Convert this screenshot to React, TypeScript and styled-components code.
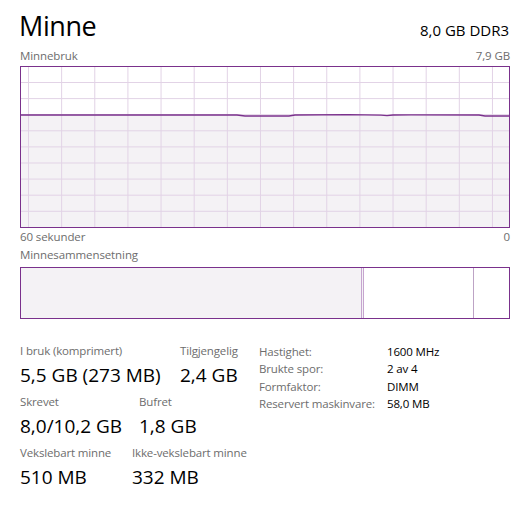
import { Fragment } from 'react';
import styled, { createGlobalStyle } from 'styled-components';

const GlobalStyle = createGlobalStyle`
  html, body {
    margin: 0;
    padding: 0;
    background: #ffffff;
  }
  body {
    font-family: 'Open Sans', 'Noto Sans', sans-serif;
    color: #000000;
  }
`;

const PURPLE = '#7a318c';

const Page = styled.div`
  display: flex;
  flex-direction: column;
  width: 490px;
  margin-left: 20px;
  padding-top: 8px;
`;

const Header = styled.div`
  display: flex;
  justify-content: space-between;
  align-items: baseline;
  height: 36px;
`;

const Title = styled.h1`
  margin: 0 0 0 -1px;
  font-size: 27px;
  line-height: 36px;
  font-weight: 400;
  letter-spacing: -0.4px;
`;

const Spec = styled.span`
  font-size: 15px;
  line-height: 20px;
  margin-right: 1px;
`;

const AxisRow = styled.div<{ $top: number }>`
  display: flex;
  justify-content: space-between;
  margin-top: ${(p) => p.$top}px;
  font-size: 11.5px;
  line-height: 16px;
  letter-spacing: -0.1px;
  color: #6d6d6d;
`;

const Chart = styled.div`
  height: 162px;
  margin-top: 2px;
  border: 1px solid ${PURPLE};
  box-sizing: border-box;

  svg {
    display: block;
  }
`;

const CompositionBar = styled.div`
  display: flex;
  height: 52px;
  margin-top: 4px;
  border: 1px solid ${PURPLE};
  box-sizing: border-box;
`;

const Segment = styled.div<{ $width?: number; $fill: string; $divider?: string }>`
  box-sizing: border-box;
  ${(p) => (p.$width ? `width: ${p.$width}px;` : 'flex: 1;')}
  flex-shrink: 0;
  background: ${(p) => p.$fill};
  ${(p) => (p.$divider ? `border-right: ${p.$divider};` : '')}
`;

const Stats = styled.div`
  display: flex;
  margin-top: 24px;
`;

const StatColumn = styled.div`
  display: flex;
  flex-direction: column;
  gap: 7px;
  width: 239px;
`;

const StatRow = styled.div`
  display: flex;
`;

const Stat = styled.div<{ $width?: number }>`
  display: flex;
  flex-direction: column;
  ${(p) => (p.$width ? `width: ${p.$width}px;` : '')}
`;

const StatLabel = styled.span`
  font-size: 11.5px;
  line-height: 16px;
  letter-spacing: -0.15px;
  color: #6d6d6d;
  white-space: nowrap;
`;

const StatValue = styled.span`
  margin-top: 4px;
  font-size: 19px;
  line-height: 24px;
  white-space: nowrap;
`;

const Details = styled.div`
  display: grid;
  grid-template-columns: 128px auto;
  grid-auto-rows: 17.5px;
  font-size: 11.5px;
  line-height: 17.5px;
  letter-spacing: -0.15px;
  margin-top: -0.5px;
`;

const DetailKey = styled.span`
  color: #6d6d6d;
`;

const DetailValue = styled.span`
  color: #000000;
`;

function UsageGraph() {
  const w = 488;
  const h = 160;
  const vLines = Array.from({ length: 15 }, (_, i) => 7.5 + i * 33.14);
  const hLines = Array.from({ length: 9 }, (_, i) => 15.5 + i * 16.1);
  const line =
    'M0 48 L216 48 L224 49 L268 49 L274 48 L328 47.6 L360 48.2 L366 48.6 L372 48 L390 47.8 L458 48 L464 49 L488 49';
  const area = `${line} L488 ${h} L0 ${h} Z`;

  return (
    <svg width={w} height={h} viewBox={`0 0 ${w} ${h}`}>
      <path d={area} fill="#f4f2f5" />
      {vLines.map((x) => (
        <line key={`v${x}`} x1={x} y1={0} x2={x} y2={h} stroke="#e2d3e6" strokeWidth={1} />
      ))}
      {hLines.map((y) => (
        <line key={`h${y}`} x1={0} y1={y} x2={w} y2={y} stroke="#e2d3e6" strokeWidth={1} />
      ))}
      <path d={line} fill="none" stroke={PURPLE} strokeWidth={1.3} />
    </svg>
  );
}

const details: [string, string][] = [
  ['Hastighet:', '1600 MHz'],
  ['Brukte spor:', '2 av 4'],
  ['Formfaktor:', 'DIMM'],
  ['Reservert maskinvare:', '58,0 MB'],
];

export default function App() {
  return (
    <>
      <GlobalStyle />
      <Page>
        <Header>
          <Title>Minne</Title>
          <Spec>8,0 GB DDR3</Spec>
        </Header>

        <AxisRow $top={4}>
          <span>Minnebruk</span>
          <span>7,9 GB</span>
        </AxisRow>
        <Chart>
          <UsageGraph />
        </Chart>
        <AxisRow $top={1}>
          <span>60 sekunder</span>
          <span>0</span>
        </AxisRow>

        <AxisRow $top={2}>
          <span>Minnesammensetning</span>
        </AxisRow>
        <CompositionBar>
          <Segment $width={343} $fill="#f4f2f5" $divider="3px double #c6a5cf" />
          <Segment $width={110} $fill="#ffffff" $divider="1px solid #bda3c5" />
          <Segment $fill="#ffffff" />
        </CompositionBar>

        <Stats>
          <StatColumn>
            <StatRow>
              <Stat $width={160}>
                <StatLabel>I bruk (komprimert)</StatLabel>
                <StatValue>5,5 GB (273 MB)</StatValue>
              </Stat>
              <Stat>
                <StatLabel>Tilgjengelig</StatLabel>
                <StatValue>2,4 GB</StatValue>
              </Stat>
            </StatRow>
            <StatRow>
              <Stat $width={119}>
                <StatLabel>Skrevet</StatLabel>
                <StatValue>8,0/10,2 GB</StatValue>
              </Stat>
              <Stat>
                <StatLabel>Bufret</StatLabel>
                <StatValue>1,8 GB</StatValue>
              </Stat>
            </StatRow>
            <StatRow>
              <Stat $width={112}>
                <StatLabel>Vekslebart minne</StatLabel>
                <StatValue>510 MB</StatValue>
              </Stat>
              <Stat>
                <StatLabel>Ikke-vekslebart minne</StatLabel>
                <StatValue>332 MB</StatValue>
              </Stat>
            </StatRow>
          </StatColumn>

          <Details>
            {details.map(([k, v]) => (
              <Fragment key={k}>
                <DetailKey>{k}</DetailKey>
                <DetailValue>{v}</DetailValue>
              </Fragment>
            ))}
          </Details>
        </Stats>
      </Page>
    </>
  );
}
